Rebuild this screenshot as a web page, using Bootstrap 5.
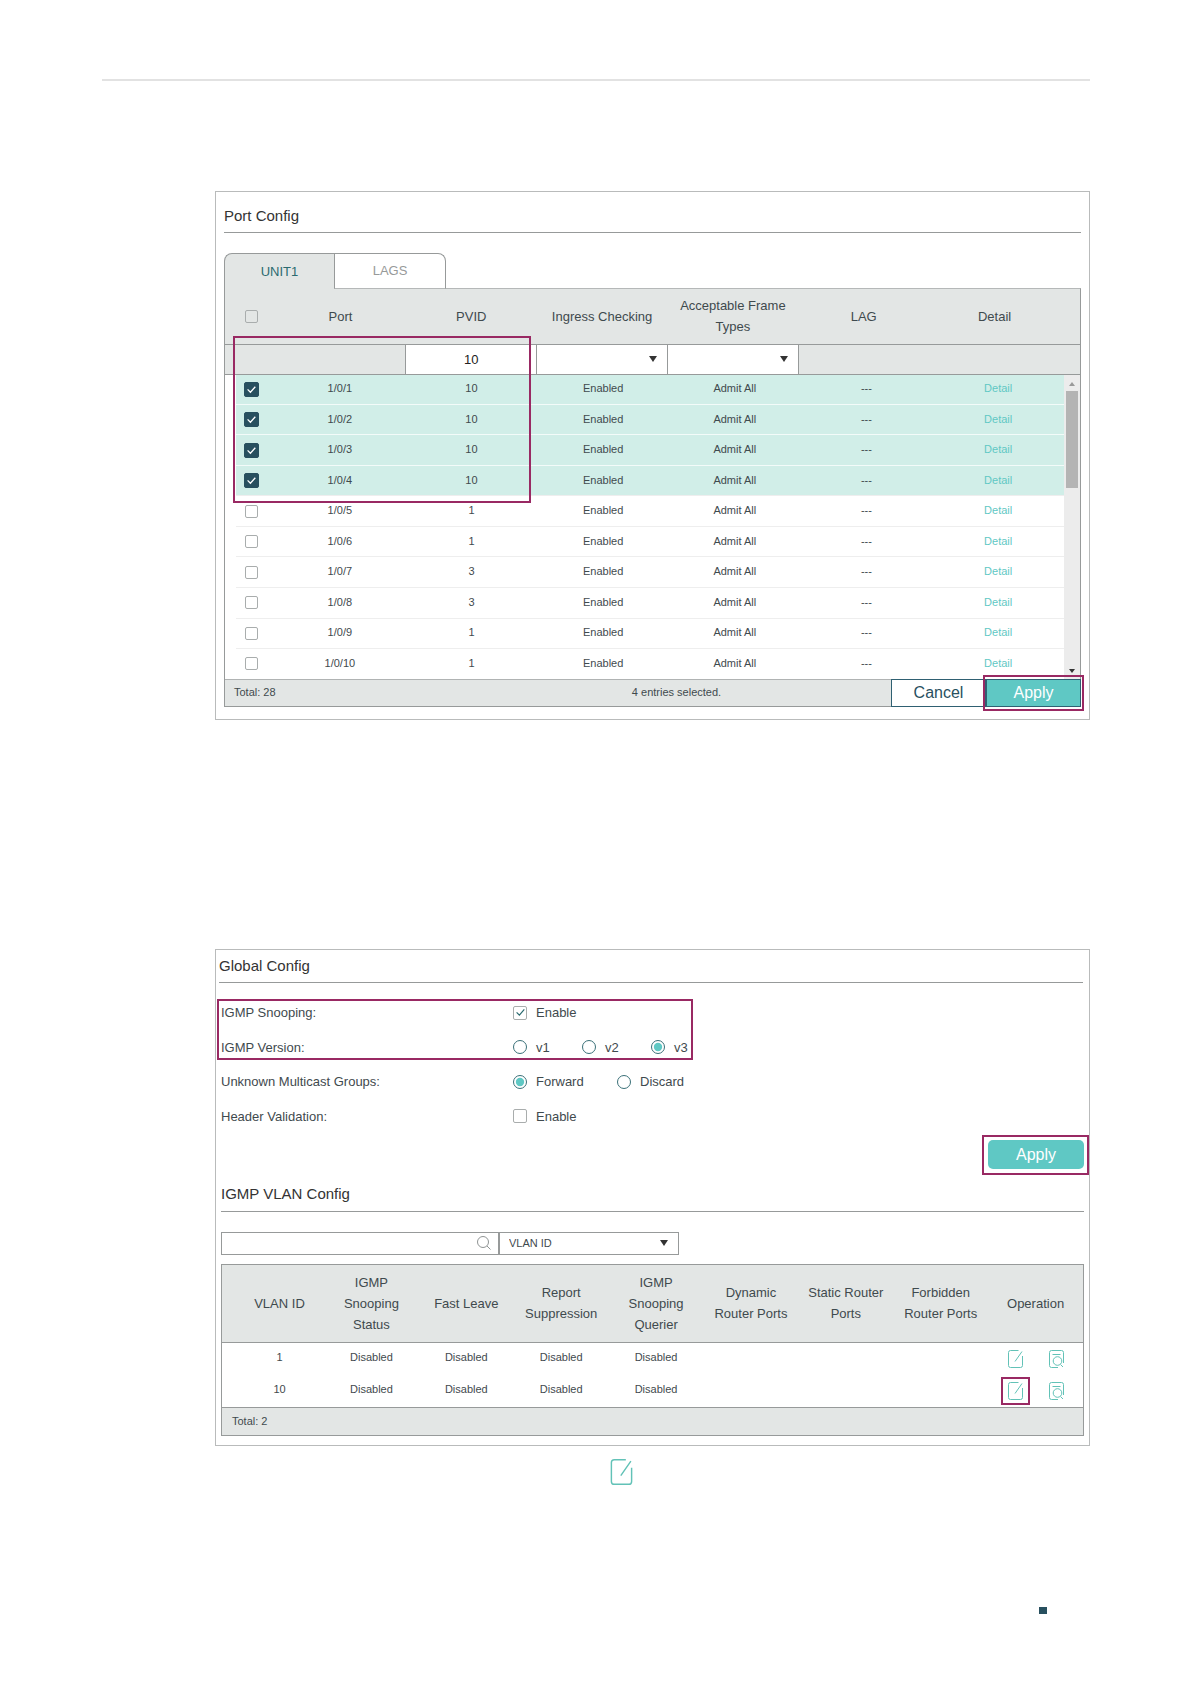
<!DOCTYPE html>
<html lang="en">
<head>
<meta charset="utf-8">
<meta name="viewport" content="width=device-width, initial-scale=1">
<title>Port Config and IGMP Snooping</title>
<link href="https://cdn.jsdelivr.net/npm/bootstrap@5.3.0/dist/css/bootstrap.min.css" rel="stylesheet">
<style>
  :root { --line: #979a9a; --head: #e3e6e5; --teal: #5fc8c4; --deep: #28505f; --mark: #992963; --ink: #3f4a4e; }
  body { font-family: "Liberation Sans", Arial, sans-serif; font-size: 13px; line-height: 21px; color: var(--ink); background: #fff; }
  .sheet { min-height: 100vh; padding: 79px 101px 0 102px; }
  .top-rule { height: 2px; background: #e2e2e2; }
  .panel { border: 1px solid #b9bbbb; margin-left: 113px; }
  .panel-port { margin-top: 110px; padding: 0 8px 12px; }
  .panel-igmp { margin-top: 229px; padding: 0 5px 9px; }
  .panel-title { font-size: 15px; line-height: 24px; font-weight: 400; color: #333; margin: 0; padding: 4px 0; border-bottom: 1px solid var(--line); }
  .panel-port .panel-title { padding-top: 12px; margin-bottom: 20px; }
  .title-global { margin: 0 1px 13px -2px; }
  .title-vlan { margin: 13px 0 20px; padding: 0 0 5px; }

  /* unit tabs */
  .unit-tabs { --bs-nav-tabs-border-width: 0; position: relative; z-index: 1; }
  .unit-tabs .nav-link { height: 36px; padding: 0; font-size: 13px; line-height: 32px; border: 1px solid var(--line); color: #979a9a; background: #fff; margin: 0 0 -1px; border-radius: 0; }
  .unit-tabs .nav-link.active { width: 110px; border-color: var(--line); border-right: 0; border-bottom: 0; border-top-left-radius: 8px; color: #2b6b70; background: var(--head); }
  .unit-tabs .nav-link:not(.active) { width: 112px; border-bottom-color: #b5b8b8; border-top-right-radius: 8px; }

  .grid-frame { border: 1px solid var(--line); }
  .port-frame { border-top-color: #b5b8b8; }
  .data-grid { width: 100%; table-layout: fixed; margin: 0; text-align: center; }
  .data-grid th { font-weight: 400; padding: 0; }
  .data-grid td { padding: 0; }
  .port-head { background: var(--head); }
  .port-head .titles { height: 55px; }
  .port-head .tick-cell { padding-left: 3px; }
  .port-head .filters td { height: 30px; border-top: 1px solid var(--line); border-bottom: 1px solid var(--line); }
  .port-head .filters td.editable { border-left: 1px solid var(--line); background: #fff; }
  .port-head .filters td.after { border-left: 1px solid var(--line); }
  .filter-field { height: 28px; padding: 0; border: 0; border-radius: 0; font-size: 13px; text-align: center; color: #222; background-color: #fff; }
  .drop { background-image: url("data:image/svg+xml,%3Csvg xmlns='http://www.w3.org/2000/svg' viewBox='0 0 8 6'%3E%3Cpath fill='%23333' d='M0 0h8L4 6z'/%3E%3C/svg%3E"); background-size: 8px 6px; background-position: right 10px center; }

  .port-body { height: 304px; padding-left: 11px; font-size: 11px; }
  .port-rows { height: 304px; line-height: 16px; }
  .port-rows tr + tr { border-top: 1px solid #eeeeee; }
  .port-rows tr.picked { background: #d1eee8; }
  .port-rows tr.picked + tr.picked { border-top-color: #f3fbf9; }
  .port-rows td { padding-bottom: 2px; }
  .port-rows td:first-child { padding: 0 7px 0 0; }
  .port-rows a { color: var(--teal); text-decoration: none; }
  .scroll-track { width: 16px; flex: none; background: #ececec; padding: 7px 0 6px; }
  .scroll-thumb { width: 12px; height: 97px; background: #b4b4b4; margin: 5px 2px auto; }

  .tick { width: 13px; height: 13px; margin: 0; display: block; border: 1px solid #a9adad; border-radius: 2px; background-color: transparent; }
  .tick-cell .tick { margin: 0 auto; }
  .tick-cell .form-check-input[type=checkbox] { border-radius: 2px; }
  .port-rows .tick { background-color: #fff; }
  .port-rows .tick:checked { width: 15px; height: 15px; border-color: var(--deep); background-color: var(--deep);
    background-size: 9px 9px; background-image: url("data:image/svg+xml,%3Csvg xmlns='http://www.w3.org/2000/svg' viewBox='0 0 9 9'%3E%3Cpath fill='none' stroke='%23fff' stroke-width='1.3' d='M.6 4.4 3.4 7.2 8.3 1.8'/%3E%3C/svg%3E"); }

  .grid-foot { background: var(--head); border-top: 1px solid var(--line); font-size: 11px; height: 28px; }
  .port-foot { border-top-color: #b0b3b3; height: 27px; }
  .port-foot .count { width: 250px; padding-left: 9px; }
  .port-foot .actions { width: 190px; margin: -1px -1px -1px auto; }
  .foot-btn { height: 28px; padding: 0; font-size: 16px; line-height: 26px; border: 1px solid #2f6072; border-radius: 0; background: #fff; color: var(--deep); }
  .foot-btn.primary { background: var(--teal); color: #fff; }
  .vlan-total { padding-left: 10px; }

  /* call-out frames laid over the content */
  .callout { position: absolute; border: 2px solid var(--mark); pointer-events: none; z-index: 2; }
  .callout-ports { top: -39px; left: 8px; width: 298px; height: 167px; }
  .callout-btn { inset: -4px -3px; }
  .callout-options { top: 3px; left: -4px; width: 476px; height: 61px; }
  .callout-apply { inset: -5px -5px -6px -6px; }
  .callout-edit { inset: -5px -7px -5px -7px; }

  .options { height: 138px; }
  .options .name { width: 292px; }
  .options .form-check-input { width: 14px; height: 14px; margin: 0 9px 0 0; border: 1px solid #a9adad; background-color: #fff; display: block; flex: none; }
  .options .form-check-input[type=checkbox] { border-radius: 2px; }
  .options .form-check-input[type=checkbox]:checked { background-size: 9px 9px; background-image: url("data:image/svg+xml,%3Csvg xmlns='http://www.w3.org/2000/svg' viewBox='0 0 9 9'%3E%3Cpath fill='none' stroke='%232b6b70' stroke-width='1.2' d='M.6 4.4 3.4 7.2 8.3 1.4'/%3E%3C/svg%3E"); }
  .options .form-check-input[type=radio] { border-color: #3a7078; }
  .options .form-check-input[type=radio]:checked { background-size: 12px 12px; background-image: url("data:image/svg+xml,%3Csvg xmlns='http://www.w3.org/2000/svg' viewBox='0 0 12 12'%3E%3Ccircle cx='6' cy='6' r='4.2' fill='%235fc8c4'/%3E%3C/svg%3E"); }
  .options .version { width: 69px; }
  .options .version:last-of-type { width: auto; }
  .options .unknown { width: 104px; }
  .apply-btn { width: 96px; height: 29px; padding: 0; font-size: 16px; line-height: 29px; border: 0; border-radius: 5px; background: var(--teal); color: #fff; display: block; }
  .apply-wrap { margin-top: 6px; }

  .search-box { width: 278px; }
  .search-box svg { position: absolute; right: 8px; top: 4px; }
  .search-field { height: 23px; padding: 0 28px 0 8px; border: 1px solid var(--line); border-radius: 0; font-size: 11px; }
  .search-kind { width: 180px; height: 23px; padding: 0 24px 0 9px; border: 1px solid var(--line); border-radius: 0; font-size: 11px; line-height: 20px; color: var(--ink); }
  .vlan-frame { margin-top: 9px; }
  .vlan-grid thead { background: var(--head); height: 78px; border-bottom: 1px solid var(--line); }
  .vlan-grid tr > :first-child { padding-left: 13px; }
  .vlan-grid tbody { font-size: 11px; }
  .vlan-grid tbody td { height: 32px; padding-bottom: 2px; }
  .vlan-grid tbody td:last-child { padding: 0; }
  .icon-btn { padding: 0; border: 0; background: none; display: block; position: relative; line-height: 0; }
  .ops { gap: 26px; }
  .outline-icon { fill: none; stroke: #62c2b7; display: block; }
  .edit-note { margin: 13px 0 0 508px; width: 23px; }
  .page-mark { width: 8px; height: 7px; background: var(--deep); margin: 122px 43px 0 auto; }
</style>
</head>
<body>
<svg class="d-none" aria-hidden="true">
  <symbol id="edit" viewBox="0 0 15 18"><path d="M10.500 .5H2.500Q.5 .5 .5 2.500V15.500Q.5 17.500 2.500 17.500H12.500Q14.500 17.500 14.500 15.500V6M7 11.500 14 1.500"/></symbol>
  <symbol id="view" viewBox="0 0 15 18"><path d="M14.500 13V2.500Q14.500 .5 12.500 .5H2.500Q.5 .5 .5 2.500V15.500Q.5 17.500 2.500 17.500H9M3.500 4.500H11.500M11.500 14.500 14 17"/><circle cx="8.500" cy="11" r="4.300"/></symbol>
</svg>
<main class="sheet">
  <div class="top-rule"></div>

  <section class="panel panel-port">
    <h2 class="panel-title">Port Config</h2>
    <div class="nav nav-tabs unit-tabs" role="tablist">
      <button class="nav-link active" type="button" role="tab" aria-selected="true">UNIT1</button>
      <button class="nav-link" type="button" role="tab" aria-selected="false">LAGS</button>
    </div>
    <div class="grid-frame port-frame">
      <table class="data-grid port-head align-middle">
        <colgroup><col style="width:50px"><col><col><col><col><col><col><col style="width:20px"></colgroup>
        <thead>
          <tr class="titles">
            <th class="tick-cell"><input class="form-check-input tick" type="checkbox" aria-label="Select all ports"></th>
            <th>Port</th><th>PVID</th><th>Ingress Checking</th><th>Acceptable Frame Types</th><th>LAG</th><th>Detail</th><th></th>
          </tr>
        </thead>
        <tbody>
          <tr class="filters">
            <td colspan="2"></td>
            <td class="editable"><input class="form-control filter-field" type="text" value="10" aria-label="PVID"></td>
            <td class="editable"><select class="form-select filter-field drop" aria-label="Ingress Checking"><option></option><option>Enabled</option></select></td>
            <td class="editable"><select class="form-select filter-field drop" aria-label="Acceptable Frame Types"><option></option><option>Admit All</option></select></td>
            <td class="after" colspan="3"></td>
          </tr>
        </tbody>
      </table>
      <div class="port-body d-flex position-relative">
        <table class="data-grid port-rows align-middle">
          <colgroup><col style="width:38px"><col><col><col><col><col><col></colgroup>
          <tbody>
            <tr class="picked"><td class="tick-cell"><input class="form-check-input tick" type="checkbox" checked aria-label="Port 1/0/1"></td><td>1/0/1</td><td>10</td><td>Enabled</td><td>Admit All</td><td>---</td><td><a href="#">Detail</a></td></tr>
            <tr class="picked"><td class="tick-cell"><input class="form-check-input tick" type="checkbox" checked aria-label="Port 1/0/2"></td><td>1/0/2</td><td>10</td><td>Enabled</td><td>Admit All</td><td>---</td><td><a href="#">Detail</a></td></tr>
            <tr class="picked"><td class="tick-cell"><input class="form-check-input tick" type="checkbox" checked aria-label="Port 1/0/3"></td><td>1/0/3</td><td>10</td><td>Enabled</td><td>Admit All</td><td>---</td><td><a href="#">Detail</a></td></tr>
            <tr class="picked"><td class="tick-cell"><input class="form-check-input tick" type="checkbox" checked aria-label="Port 1/0/4"></td><td>1/0/4</td><td>10</td><td>Enabled</td><td>Admit All</td><td>---</td><td><a href="#">Detail</a></td></tr>
            <tr><td class="tick-cell"><input class="form-check-input tick" type="checkbox" aria-label="Port 1/0/5"></td><td>1/0/5</td><td>1</td><td>Enabled</td><td>Admit All</td><td>---</td><td><a href="#">Detail</a></td></tr>
            <tr><td class="tick-cell"><input class="form-check-input tick" type="checkbox" aria-label="Port 1/0/6"></td><td>1/0/6</td><td>1</td><td>Enabled</td><td>Admit All</td><td>---</td><td><a href="#">Detail</a></td></tr>
            <tr><td class="tick-cell"><input class="form-check-input tick" type="checkbox" aria-label="Port 1/0/7"></td><td>1/0/7</td><td>3</td><td>Enabled</td><td>Admit All</td><td>---</td><td><a href="#">Detail</a></td></tr>
            <tr><td class="tick-cell"><input class="form-check-input tick" type="checkbox" aria-label="Port 1/0/8"></td><td>1/0/8</td><td>3</td><td>Enabled</td><td>Admit All</td><td>---</td><td><a href="#">Detail</a></td></tr>
            <tr><td class="tick-cell"><input class="form-check-input tick" type="checkbox" aria-label="Port 1/0/9"></td><td>1/0/9</td><td>1</td><td>Enabled</td><td>Admit All</td><td>---</td><td><a href="#">Detail</a></td></tr>
            <tr><td class="tick-cell"><input class="form-check-input tick" type="checkbox" aria-label="Port 1/0/10"></td><td>1/0/10</td><td>1</td><td>Enabled</td><td>Admit All</td><td>---</td><td><a href="#">Detail</a></td></tr>
          </tbody>
        </table>
        <div class="scroll-track d-flex flex-column align-items-center" aria-hidden="true">
          <svg width="6" height="4" viewBox="0 0 6 4"><path fill="#999" d="M0 4h6L3 0z"/></svg>
          <div class="scroll-thumb"></div>
          <svg width="6" height="4" viewBox="0 0 6 4"><path fill="#333" d="M0 0h6L3 4z"/></svg>
        </div>
        <div class="callout callout-ports"></div>
      </div>
      <div class="grid-foot port-foot d-flex align-items-center position-relative">
        <span class="count">Total: 28</span>
        <span class="position-absolute start-0 end-0 text-center pe-none ms-5">4 entries selected.</span>
        <div class="actions d-flex position-relative">
          <button class="btn foot-btn w-50" type="button">Cancel</button>
          <div class="w-50 position-relative">
            <button class="btn foot-btn primary w-100 d-block" type="button">Apply</button>
            <div class="callout callout-btn"></div>
          </div>
        </div>
      </div>
    </div>
  </section>

  <section class="panel panel-igmp">
    <h2 class="panel-title title-global">Global Config</h2>
    <form class="options d-flex flex-column position-relative">
      <div class="d-flex align-items-center flex-fill">
        <span class="name">IGMP Snooping:</span>
        <label class="d-flex align-items-center"><input class="form-check-input" type="checkbox" checked>Enable</label>
      </div>
      <div class="d-flex align-items-center flex-fill">
        <span class="name">IGMP Version:</span>
        <label class="version d-flex align-items-center"><input class="form-check-input" type="radio" name="version">v1</label>
        <label class="version d-flex align-items-center"><input class="form-check-input" type="radio" name="version">v2</label>
        <label class="version d-flex align-items-center"><input class="form-check-input" type="radio" name="version" checked>v3</label>
      </div>
      <div class="d-flex align-items-center flex-fill">
        <span class="name">Unknown Multicast Groups:</span>
        <label class="unknown d-flex align-items-center"><input class="form-check-input" type="radio" name="unknown" checked>Forward</label>
        <label class="unknown d-flex align-items-center"><input class="form-check-input" type="radio" name="unknown">Discard</label>
      </div>
      <div class="d-flex align-items-center flex-fill">
        <span class="name">Header Validation:</span>
        <label class="d-flex align-items-center"><input class="form-check-input" type="checkbox">Enable</label>
      </div>
      <div class="callout callout-options"></div>
    </form>
    <div class="apply-wrap d-flex justify-content-end">
      <div class="position-relative">
        <button class="btn apply-btn" type="button">Apply</button>
        <div class="callout callout-apply"></div>
      </div>
    </div>

    <h2 class="panel-title title-vlan">IGMP VLAN Config</h2>
    <div class="d-flex">
      <div class="search-box position-relative">
        <input class="form-control search-field" type="search" aria-label="Search VLANs">
        <svg width="14" height="14" viewBox="0 0 14 14" fill="none" stroke="#8f9494" aria-hidden="true"><circle cx="6" cy="6" r="5.500"/><path d="M10 10 13.500 13.500"/></svg>
      </div>
      <select class="form-select search-kind drop" aria-label="Search by"><option>VLAN ID</option></select>
    </div>
    <div class="grid-frame vlan-frame">
      <table class="data-grid vlan-grid align-middle">
        <colgroup><col style="width:102px"><col><col><col><col><col><col><col><col></colgroup>
        <thead>
          <tr>
            <th>VLAN ID</th><th>IGMP<br>Snooping<br>Status</th><th>Fast Leave</th><th>Report<br>Suppression</th><th>IGMP<br>Snooping<br>Querier</th><th>Dynamic<br>Router Ports</th><th>Static Router<br>Ports</th><th>Forbidden<br>Router Ports</th><th>Operation</th>
          </tr>
        </thead>
        <tbody>
          <tr>
            <td>1</td><td>Disabled</td><td>Disabled</td><td>Disabled</td><td>Disabled</td><td></td><td></td><td></td>
            <td><div class="ops d-flex justify-content-center">
              <button class="icon-btn" type="button" aria-label="Edit VLAN 1"><svg class="outline-icon" width="15" height="18"><use href="#edit"/></svg></button>
              <button class="icon-btn" type="button" aria-label="View VLAN 1"><svg class="outline-icon" width="15" height="18"><use href="#view"/></svg></button>
            </div></td>
          </tr>
          <tr>
            <td>10</td><td>Disabled</td><td>Disabled</td><td>Disabled</td><td>Disabled</td><td></td><td></td><td></td>
            <td><div class="ops d-flex justify-content-center">
              <button class="icon-btn" type="button" aria-label="Edit VLAN 10"><svg class="outline-icon" width="15" height="18"><use href="#edit"/></svg><span class="callout callout-edit"></span></button>
              <button class="icon-btn" type="button" aria-label="View VLAN 10"><svg class="outline-icon" width="15" height="18"><use href="#view"/></svg></button>
            </div></td>
          </tr>
        </tbody>
      </table>
      <div class="grid-foot d-flex align-items-center"><span class="vlan-total">Total: 2</span></div>
    </div>
  </section>

  <div class="edit-note"><svg class="outline-icon" width="23" height="26"><use href="#edit"/></svg></div>
  <div class="page-mark"></div>
</main>
<script src="https://cdn.jsdelivr.net/npm/bootstrap@5.3.0/dist/js/bootstrap.bundle.min.js"></script>
</body>
</html>
